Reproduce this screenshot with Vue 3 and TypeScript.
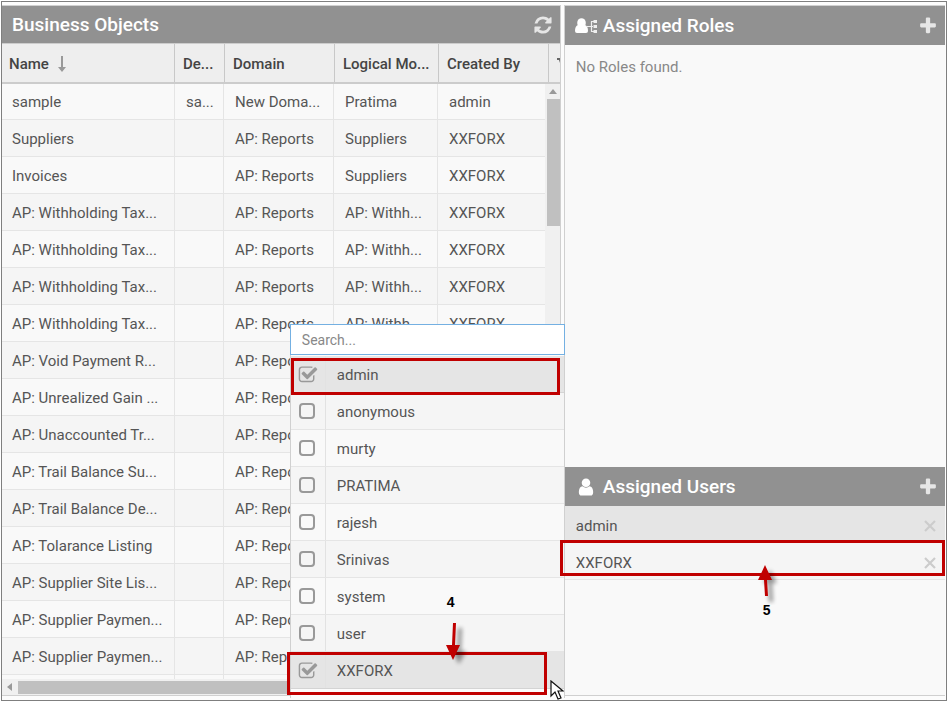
<script setup lang="ts">
import { ref } from 'vue'

interface BusinessObject {
  name: string
  description: string
  domain: string
  model: string
  createdBy: string
}

interface UserOption {
  name: string
  checked: boolean
}

const object = (name: string, model = 'AP: Withh...'): BusinessObject => ({
  name,
  description: '',
  domain: 'AP: Reports',
  model,
  createdBy: 'XXFORX',
})

const objects: BusinessObject[] = [
  { name: 'sample', description: 'sa...', domain: 'New Doma...', model: 'Pratima', createdBy: 'admin' },
  object('Suppliers', 'Suppliers'),
  object('Invoices', 'Suppliers'),
  object('AP: Withholding Tax...'),
  object('AP: Withholding Tax...'),
  object('AP: Withholding Tax...'),
  object('AP: Withholding Tax...'),
  object('AP: Void Payment R...'),
  object('AP: Unrealized Gain ...'),
  object('AP: Unaccounted Tr...'),
  object('AP: Trail Balance Su...'),
  object('AP: Trail Balance De...'),
  object('AP: Tolarance Listing'),
  object('AP: Supplier Site Lis...'),
  object('AP: Supplier Paymen...'),
  object('AP: Supplier Paymen...'),
]

const search = ref('')
const options = ref<UserOption[]>([
  { name: 'admin', checked: true },
  { name: 'anonymous', checked: false },
  { name: 'murty', checked: false },
  { name: 'PRATIMA', checked: false },
  { name: 'rajesh', checked: false },
  { name: 'Srinivas', checked: false },
  { name: 'system', checked: false },
  { name: 'user', checked: false },
  { name: 'XXFORX', checked: true },
])
const assignedUsers = ['admin', 'XXFORX']

const plusPath =
  'M1600 736v192q0 40-28 68t-68 28h-416v416q0 40-28 68t-68 28h-192q-40 0-68-28t-28-68v-416h-416q-40 0-68-28t-28-68v-192q0-40 28-68t68-28h416v-416q0-40 28-68t68-28h192q40 0 68 28t28 68v416h416q40 0 68 28t28 68z'
const userPath =
  'M1536 1399q0 109-62.5 187t-150.5 78h-854q-88 0-150.5-78t-62.5-187q0-85 8.5-160.5t31.5-152 58.5-131 94-89 134.5-34.5q131 128 313 128t313-128q76 0 134.5 34.5t94 89 58.5 131 31.5 152 8.5 160.5zm-256-887q0 159-112.5 271.5t-271.5 112.5-271.5-112.5-112.5-271.5 112.5-271.5 271.5-112.5 271.5 112.5 112.5 271.5z'
const refreshPath =
  'M1639 1056q0 5-1 7-64 268-268 434.5t-478 166.5q-146 0-282.5-55t-243.5-157l-129 129q-19 19-45 19t-45-19-19-45v-448q0-26 19-45t45-19h448q26 0 45 19t19 45-19 45l-137 137q71 66 161 102t187 36q134 0 250-65t186-179q11-17 53-117 8-23 30-23h192q13 0 22.5 9.5t9.5 22.5zm25-800v448q0 26-19 45t-45 19h-448q-26 0-45-19t-19-45 19-45l138-138q-148-137-349-137-134 0-250 65t-186 179q-11 17-53 117-8 23-30 23h-199q-13 0-22.5-9.5t-9.5-22.5v-7q65-268 270-434.5t480-166.5q146 0 284 55.5t245 156.5l130-129q19-19 45-19t45 19 19 45z'
const checkPath =
  'M1472 930v318q0 119-84.5 203.5t-203.5 84.5h-832q-119 0-203.5-84.5t-84.5-203.5v-832q0-119 84.5-203.5t203.5-84.5h832q63 0 117 25 15 7 18 23 3 17-9 29l-49 49q-10 10-23 10-3 0-9-2-23-6-45-6h-832q-66 0-113 47t-47 113v832q0 66 47 113t113 47h832q66 0 113-47t47-113v-254q0-13 9-22l64-64q10-10 23-10 6 0 12 3 20 8 20 29zm231-489l-814 814q-24 24-57 24t-57-24l-430-430q-24-24-24-57t24-57l110-110q24-24 57-24t57 24l263 263 647-647q24-24 57-24t57 24l110 110q24 24 24 57t-24 57z'
</script>

<template>
  <main class="frame">
    <section class="panel objects">
      <header class="bar objects-bar">
        <h2>Business Objects</h2>
        <button class="tool" type="button" aria-label="Refresh">
          <svg width="20" height="20" viewBox="0 0 1792 1792"><path :d="refreshPath" fill="currentColor" /></svg>
        </button>
      </header>

      <table class="grid grid-head">
        <colgroup>
          <col class="c-name" /><col class="c-desc-head" /><col class="c-domain" /><col class="c-model" /><col /><col class="c-more" />
        </colgroup>
        <thead>
          <tr>
            <th scope="col" aria-sort="descending">
              Name
              <svg class="sort" width="8" height="16" viewBox="0 0 8 16">
                <path d="M3 0h2v11h3L4 16 0 11h3z" fill="#999" />
              </svg>
            </th>
            <th scope="col">De...</th>
            <th scope="col">Domain</th>
            <th scope="col">Logical Mo...</th>
            <th scope="col">Created By</th>
            <th class="more" aria-label="More columns">
              <svg width="3" height="5" viewBox="0 0 3 5"><path d="M0 0h3v5L2 2H0z" fill="#666" /></svg>
            </th>
          </tr>
        </thead>
      </table>

      <div class="grid-view">
        <div class="grid-rows">
          <table class="grid grid-body" aria-label="Business Objects">
            <colgroup>
              <col class="c-name" /><col class="c-desc" /><col class="c-domain" /><col class="c-model" /><col />
            </colgroup>
            <tbody>
              <tr v-for="(row, i) in objects" :key="i">
                <td>{{ row.name }}</td>
                <td>{{ row.description }}</td>
                <td>{{ row.domain }}</td>
                <td>{{ row.model }}</td>
                <td>{{ row.createdBy }}</td>
              </tr>
              <tr class="blank"><td></td><td></td><td></td><td></td><td></td></tr>
            </tbody>
          </table>
        </div>
        <div class="vscroll">
          <svg width="8" height="5" viewBox="0 0 8 5"><path d="M4 0l4 5H0z" fill="#999" /></svg>
          <div class="vthumb"></div>
        </div>
      </div>
      <div class="hscroll">
        <svg width="5" height="8" viewBox="0 0 5 8"><path d="M0 4l5-4v8z" fill="#999" /></svg>
        <div class="hthumb"></div>
      </div>

      <div class="picker">
        <input v-model="search" class="search" type="text" placeholder="Search..." aria-label="Search users" />
        <ul>
          <li v-for="option in options" :key="option.name" :class="{ selected: option.checked }">
            <label>
              <span class="check">
                <input v-model="option.checked" type="checkbox" />
                <svg v-if="option.checked" width="20" height="20" viewBox="0 0 1792 1792"><path :d="checkPath" fill="#999" /></svg>
              </span>
              <span class="option-name">{{ option.name }}</span>
            </label>
          </li>
        </ul>
        <div class="mark mark-first"></div>
        <div class="mark mark-last"></div>
        <div class="callout callout-four">
          <span>4</span>
          <svg width="28" height="46" viewBox="0 0 28 46">
            <g class="shade"><path d="M14 5h4l-1 23h5l-7 13-7-13h5z" fill="#000" /></g>
            <path d="M9 0h3l-1 22h5L9 37 2 22h6z" fill="#c00000" />
          </svg>
        </div>
        <svg class="pointer" width="14" height="20" viewBox="0 0 14 20">
          <path d="M1 1v15l4-4 3 7 3-1-3-7h5z" fill="#fff" stroke="#111" stroke-width="1.200" />
        </svg>
      </div>
    </section>

    <div class="side">
      <section class="roles">
        <header class="bar">
          <svg class="role-icon" width="22" height="16" viewBox="0 0 22 16">
            <ellipse cx="6.500" cy="5" rx="4.300" ry="4.800" fill="#fff" />
            <path d="M3 7q3.500 3 7 0 3 1 3 6 0 2-2 2H2q-2 0-2-2 0-5 3-6z" fill="#fff" />
            <path d="M12 8.500h6M16.500 3.500v10M16 3.500h3M16 13.500h3" stroke="#eee" stroke-width="1.200" fill="none" />
            <path d="M18.500 2h3.500v3h-3.500zM18.500 7h3.500v3h-3.500zM18.500 12h3.500v3h-3.500z" fill="#eee" />
          </svg>
          <h2>Assigned Roles</h2>
          <button class="tool" type="button" aria-label="Add role">
            <svg width="20" height="20" viewBox="0 0 1792 1792"><path :d="plusPath" fill="currentColor" /></svg>
          </button>
        </header>
        <p class="empty">No Roles found.</p>
      </section>

      <section class="users">
        <header class="bar">
          <svg class="user-icon" width="20" height="20" viewBox="0 0 1792 1792"><path :d="userPath" fill="#fff" /></svg>
          <h2>Assigned Users</h2>
          <button class="tool" type="button" aria-label="Add user">
            <svg width="20" height="20" viewBox="0 0 1792 1792"><path :d="plusPath" fill="currentColor" /></svg>
          </button>
        </header>
        <ul class="assigned">
          <li v-for="user in assignedUsers" :key="user">
            <span>{{ user }}</span>
            <button class="remove" type="button" :aria-label="'Remove ' + user">
              <svg width="12" height="12" viewBox="0 0 12 12"><path d="M1 1l10 10M11 1L1 11" stroke="#ccc" stroke-width="2.200" /></svg>
            </button>
          </li>
        </ul>
        <div class="mark mark-user"></div>
        <div class="callout callout-five">
          <svg width="28" height="40" viewBox="0 0 28 40">
            <g class="shade"><path d="M14 5l7 13h-5l1 19h-4l-1-19H7z" fill="#000" /></g>
            <path d="M9 0l7 15h-5l1 16H9L8 15H2z" fill="#c00000" />
          </svg>
          <span>5</span>
        </div>
      </section>
    </div>
  </main>
</template>

<style>
body {
  margin: 0;
  background: #fff;
}
</style>

<style scoped>
* {
  box-sizing: border-box;
}

.frame {
  display: flex;
  gap: 3px;
  height: calc(100vh - 1px);
  min-height: 600px;
  margin: 1px 0 0 1px;
  padding: 3px 1px 4px 0;
  border: 1px solid #7f7f7f;
  background: #fcfcfc;
  overflow: hidden;
  color: #555;
  font-family: Roboto, "Liberation Sans", sans-serif;
  font-size: 15px;
}

h2,
p,
ul {
  margin: 0;
  padding: 0;
}

ul {
  list-style: none;
}

button {
  display: grid;
  place-items: center;
  padding: 0;
  border: 0;
  background: none;
  cursor: pointer;
}

svg {
  display: block;
  flex: none;
}

.panel {
  position: relative;
  display: flex;
  flex: 559 1 0;
  flex-direction: column;
  min-width: 0;
  border: 1px solid #d0d0d0;
  border-left: 0;
}

.bar {
  display: flex;
  flex: none;
  align-items: center;
  height: 39px;
  padding: 0 7px 0 10px;
  background: #919191;
  color: #fff;
}

.bar h2 {
  font-size: 19px;
  font-weight: 500;
  line-height: 24px;
}

.objects-bar {
  height: 37px;
}

.tool {
  margin-left: auto;
  color: #e6e6e6;
}

.grid {
  width: 100%;
  border-collapse: separate;
  border-spacing: 0;
  table-layout: fixed;
}

.c-name { width: 173px; }
.c-desc-head { width: 50px; }
.c-desc { width: 49px; }
.c-domain { width: 110px; }
.c-model { width: 104px; }
.c-more { width: 11px; }

.grid-head {
  position: relative;
  z-index: 1;
  flex: none;
  border-top: 1px solid #ccc;
  border-bottom: 2px solid #ccc;
  background: #eee;
}

th,
td {
  overflow: hidden;
  padding: 2px 0 0 11px;
  border-right: 1px solid #e5e5e5;
  text-align: left;
  white-space: nowrap;
}

th {
  height: 38px;
  padding: 2px 0 0 8px;
  border-color: #c8c8c8;
  color: #444;
  font-weight: 500;
}

th:first-child {
  padding-left: 7px;
}

th:last-child,
td:last-child {
  border-right: 0;
}

th.more {
  padding: 0 0 6px 8px;
}

.sort {
  display: inline-block;
  margin-left: 5px;
  vertical-align: -3px;
}

.grid-view {
  display: flex;
  flex: 1;
  min-height: 0;
  margin-top: -1px;
}

.grid-rows {
  flex: 1;
  min-width: 0;
  overflow: hidden;
}

td {
  height: 37px;
  border-bottom: 1px solid #e5e5e5;
  background: #f9f9f9;
}

td:first-child {
  padding-left: 10px;
}

tr:nth-child(even) td {
  background: #f5f5f5;
}

.grid-body .blank td {
  background: #f9f9f9;
}

.vscroll {
  display: flex;
  flex-direction: column;
  align-items: center;
  width: 15px;
  padding: 6px 0 0 2px;
  background: #f0f0f0;
}

.vthumb {
  width: 100%;
  height: 127px;
  margin-top: 5px;
  background: #c0c0c0;
}

.hscroll {
  display: flex;
  flex: none;
  align-items: center;
  gap: 6px;
  height: 16px;
  padding: 0 15px 0 5px;
  background: #f0f0f0;
}

.hthumb {
  width: 380px;
  height: 13px;
  background: #c0c0c0;
}

.picker {
  position: absolute;
  top: 318px;
  right: -5px;
  z-index: 2;
  width: 275px;
  height: 374px;
  background: #fcfcfc;
  border: 1px solid #d0d0d0;
  border-top: 0;
  border-bottom: 0;
}

.search {
  display: block;
  width: calc(100% + 2px);
  height: 31px;
  margin: 0 -1px 1px;
  padding: 0 11px;
  border: 1px solid #74b0e2;
  border-radius: 0;
  outline: 0;
  background: #fff;
  color: #555;
  font: inherit;
  font-size: 14px;
}

.search::placeholder {
  color: #888;
  opacity: 1;
}

.picker li {
  height: 37px;
  border-bottom: 1px solid #e5e5e5;
  background: #f9f9f9;
}

.picker li:nth-child(even) {
  background: #f5f5f5;
}

.picker li.selected {
  background: #e5e5e5;
  border-color: #d4d4d4;
}

.picker label {
  display: flex;
  height: 100%;
}

.check {
  position: relative;
  display: flex;
  flex: none;
  align-items: center;
  width: 35px;
  padding-left: 8px;
  border-right: 1px solid #e2e2e2;
}

.check input {
  appearance: none;
  width: 16px;
  height: 16px;
  margin: 0;
  border: 2px solid #999;
  border-radius: 4px;
}

.check input:checked {
  border-color: transparent;
}

.check svg {
  position: absolute;
  top: 9px;
  left: 7px;
}

.option-name {
  padding-left: 11px;
  line-height: 39px;
}

.side {
  display: flex;
  flex: 381 1 0;
  flex-direction: column;
  min-width: 0;
  border: 1px solid #d0d0d0;
  border-right: 0;
  background: #f9f9f9;
}

.roles {
  flex: 461 1 0;
}

.users {
  position: relative;
  flex: 228 1 0;
}

.role-icon {
  margin-right: 6px;
}

.user-icon {
  margin: 0 7px 0 1px;
}

.empty {
  padding: 12px 11px;
  color: #888;
  line-height: 20px;
}

.assigned li {
  display: flex;
  align-items: center;
  justify-content: space-between;
  height: 37px;
  padding: 3px 9px 0 11px;
  border-bottom: 1px solid #e5e5e5;
  background: #f5f5f5;
}

.assigned li:first-child {
  background: #e5e5e5;
}

.mark {
  position: absolute;
  z-index: 3;
  border: 3px solid #c00000;
  pointer-events: none;
}

.mark-first {
  top: 34px;
  left: 0;
  width: 269px;
  height: 37px;
}

.mark-last {
  top: 328px;
  left: -4px;
  width: 260px;
  height: 43px;
}

.mark-user {
  top: 73px;
  right: 0;
  left: -5px;
  height: 36px;
}

.callout {
  position: absolute;
  z-index: 4;
  color: #000;
  font-family: "Liberation Sans", sans-serif;
  font-size: 14px;
  font-weight: 700;
  line-height: 16px;
  pointer-events: none;
}

.callout-four {
  top: 270px;
  left: 153px;
}

.callout-four span {
  display: block;
  padding: 0 0 13px 3px;
}

.callout-five {
  top: 98px;
  left: 191px;
}

.callout-five span {
  display: block;
  padding-left: 7px;
  margin-top: -3px;
}

.shade {
  filter: blur(2px);
  opacity: 0.4;
}

.pointer {
  position: absolute;
  top: 356px;
  left: 259px;
}
</style>
